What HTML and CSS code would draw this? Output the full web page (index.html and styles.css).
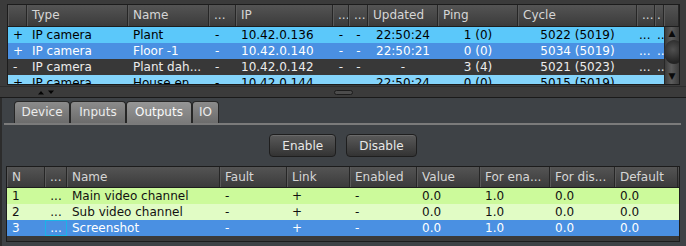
FILE: index.html
```html
<!DOCTYPE html>
<html lang="en">
<head>
  <meta charset="UTF-8" />
  <title>Devices</title>
  <link rel="stylesheet" href="styles.css">
</head>
<body>
  <!-- Device list -->
  <div class="devices">
    <div class="frame top-frame">
      <div class="dev-head">
        <div class="hcell"></div>
        <div class="hcell">Type</div>
        <div class="hcell">Name</div>
        <div class="hcell">...</div>
        <div class="hcell">IP</div>
        <div class="hcell">...</div>
        <div class="hcell">...</div>
        <div class="hcell">Updated</div>
        <div class="hcell">Ping</div>
        <div class="hcell">Cycle</div>
        <div class="hcell">...</div>
        <div class="hcell tight">.</div>
        <div class="hcell"></div>
      </div>
      <div class="dev-body">
        <div class="dev-rows">
          <div class="dev-row light">
            <div class="cell">+</div><div class="cell">IP camera</div><div class="cell">Plant</div><div class="cell dash">-</div>
            <div class="cell">10.42.0.136</div><div class="cell mid">-</div><div class="cell mid">-</div>
            <div class="cell mid">22:50:24</div><div class="cell mid">1 (0)</div><div class="cell mid">5022 (5019)</div>
            <div class="cell tight">...</div><div class="cell tight">...</div>
          </div>
          <div class="dev-row selected">
            <div class="cell">+</div><div class="cell">IP camera</div><div class="cell">Floor -1</div><div class="cell dash">-</div>
            <div class="cell">10.42.0.140</div><div class="cell mid">-</div><div class="cell mid">-</div>
            <div class="cell mid">22:50:21</div><div class="cell mid">0 (0)</div><div class="cell mid">5034 (5019)</div>
            <div class="cell tight">...</div><div class="cell tight">...</div>
          </div>
          <div class="dev-row dark">
            <div class="cell">-</div><div class="cell">IP camera</div><div class="cell">Plant dah...</div><div class="cell dash">-</div>
            <div class="cell">10.42.0.142</div><div class="cell mid">-</div><div class="cell mid">-</div>
            <div class="cell mid">-</div><div class="cell mid">3 (4)</div><div class="cell mid">5021 (5023)</div>
            <div class="cell tight">...</div><div class="cell tight">...</div>
          </div>
          <div class="dev-row pale">
            <div class="cell">+</div><div class="cell">IP camera</div><div class="cell">House en...</div><div class="cell dash">-</div>
            <div class="cell">10.42.0.144</div><div class="cell mid"></div><div class="cell mid"></div>
            <div class="cell mid">22:50:24</div><div class="cell mid">0 (0)</div><div class="cell mid">5015 (5019)</div>
            <div class="cell tight">...</div><div class="cell tight">...</div>
          </div>
        </div>
        <div class="scrollbar">
          <span class="scroll-arrow">&#9650;</span>
          <span class="scroll-thumb"></span>
          <span class="scroll-arrow">&#9660;</span>
        </div>
      </div>
    </div>
    <div class="splitter">
      <div class="split-arrows">
        <svg width="18" height="5" viewBox="0 0 18 5"><path d="M1 4.5 L4 1 L7 4.5 Z M11 0.5 L17 0.5 L14 4 Z" fill="#050505"/></svg>
      </div>
      <span class="grip"></span>
      <div></div>
    </div>
  </div>

  <!-- Detail panel -->
  <div class="panel">
    <div class="tabs">
      <div class="tab">Device</div>
      <div class="tab">Inputs</div>
      <div class="tab active">Outputs</div>
      <div class="tab">IO</div>
    </div>
    <div class="actions">
      <button class="btn">Enable</button>
      <button class="btn">Disable</button>
    </div>
    <div class="frame out-frame">
      <div class="out-head">
        <div class="hcell">N</div>
        <div class="hcell mid">...</div>
        <div class="hcell">Name</div>
        <div class="hcell">Fault</div>
        <div class="hcell">Link</div>
        <div class="hcell">Enabled</div>
        <div class="hcell">Value</div>
        <div class="hcell">For ena...</div>
        <div class="hcell">For dis...</div>
        <div class="hcell">Default</div>
      </div>
      <div class="out-row lime">
        <div class="cell">1</div><div class="cell mid">...</div><div class="cell">Main video channel</div><div class="cell">-</div><div class="cell">+</div>
        <div class="cell">-</div><div class="cell">0.0</div><div class="cell">1.0</div><div class="cell">0.0</div><div class="cell">0.0</div>
      </div>
      <div class="out-row mint">
        <div class="cell">2</div><div class="cell mid">...</div><div class="cell">Sub video channel</div><div class="cell">-</div><div class="cell">+</div>
        <div class="cell">-</div><div class="cell">0.0</div><div class="cell">1.0</div><div class="cell">0.0</div><div class="cell">0.0</div>
      </div>
      <div class="out-row selected">
        <div class="cell">3</div><div class="cell mid focus">...</div><div class="cell">Screenshot</div><div class="cell">-</div><div class="cell">+</div>
        <div class="cell">-</div><div class="cell">0.0</div><div class="cell">1.0</div><div class="cell">0.0</div><div class="cell">0.0</div>
      </div>
    </div>
  </div>
</body>
</html>
```

FILE: styles.css
```css
body {
  margin: 0;
  width: 686px;
  height: 246px;
  overflow: hidden;
  font-family: 'DejaVu Sans', sans-serif;
  font-size: 12px;
  background: #3b3b3b;
  color: #e6e6e6;
}

/* Shared grid frame */
.frame {
  border: 1px solid #1c1c1c;
  background: #3a3a3a;
  overflow: hidden;
}

.hcell {
  padding: 0 5px;
  white-space: nowrap;
  overflow: hidden;
  color: #d6d6d6;
  border-right: 1px solid #262626;
  box-shadow: inset 1px 0 #5a5a5a;
}

.cell {
  padding: 0 5px;
  white-space: nowrap;
  overflow: hidden;
}

.mid { text-align: center; }
.tight { padding: 0 2px; }
.dash { padding-left: 6px; }

/* Device list */
.top-frame {
  margin: 4px 6px 0 7px;
  height: 79px;
  display: flex;
  flex-direction: column;
}

.dev-head {
  display: grid;
  grid-template-columns: 19px 101px 81px 27px 97px 16px 19px 70px 80px 119px 18px 9px 15px;
  height: 21px;
  line-height: 21px;
  border-bottom: 1px solid #1e1e1e;
  background: linear-gradient(to bottom, #545454, #3b3b3b);
}

.dev-body {
  display: flex;
  flex: 1;
  overflow: hidden;
}

.dev-rows {
  flex: 1;
}

.dev-row {
  display: grid;
  grid-template-columns: 19px 101px 81px 27px 97px 16px 19px 70px 80px 119px 18px 9px;
  height: 16px;
  line-height: 16px;
}

.dev-row.light { background: #5bc8fa; color: #000; }
.dev-row.selected { background: #4a90e2; color: #fff; }
.dev-row.dark { background: #383838; color: #ececec; }
.dev-row.pale { background: #84d4fb; color: #000; }

.scrollbar {
  width: 15px;
  display: flex;
  flex-direction: column;
  align-items: center;
  background: linear-gradient(to right, #3c3c3c, #5c5c5c 45%, #3c3c3c);
  border-left: 1px solid #262626;
  box-sizing: border-box;
}

.scroll-arrow {
  font-size: 9px;
  line-height: 12px;
  color: #0a0a0a;
}

.scroll-thumb {
  width: 20px;
  height: 24px;
  margin: 1px 0 6px 4px;
  border-radius: 50%;
  background: radial-gradient(circle at 45% 40%, #505050, #242424 70%);
}

/* Splitter */
.splitter {
  display: grid;
  grid-template-columns: 1fr auto 1fr;
  align-items: center;
  height: 10px;
  margin-top: 1px;
  border-top: 1px solid #2d2d2d;
  border-bottom: 1px solid #1a1a1a;
}

.split-arrows {
  padding-left: 37px;
  line-height: 0;
}

.grip {
  width: 17px;
  height: 3px;
  border: 1px solid #1c1c1c;
  border-radius: 3px;
  background: #4c4c4c;
}

/* Detail panel */
.panel {
  height: 149px;
  background: #3e4246;
  box-shadow: inset 2px 0 #2c2c2c;
  overflow: hidden;
}

.tabs {
  display: flex;
  margin: 0 5px 0 4px;
  padding: 3px 0 0 10px;
  border-bottom: 2px solid #7b7b7b;
}

.tab {
  box-sizing: border-box;
  min-width: 56px;
  height: 22px;
  line-height: 21px;
  padding: 0 6px;
  text-align: center;
  border: 1px solid #262626;
  border-bottom: none;
  border-radius: 4px 4px 0 0;
  background: linear-gradient(to bottom, #8b8b8b, #6c6c6c);
  color: #ececec;
}

.tab:last-child { min-width: 0; }

.tab.active {
  padding: 0 8px;
  background: linear-gradient(to bottom, #969696, #7a7a7a);
  color: #fafafa;
}

.actions {
  display: flex;
  justify-content: center;
  gap: 10px;
  margin-top: 9px;
}

.btn {
  height: 23px;
  padding: 0 12px;
  font-family: 'DejaVu Sans', sans-serif;
  font-size: 12px;
  color: #e8e8e8;
  border: 1px solid #1e1e1e;
  border-radius: 4px;
  background: linear-gradient(to bottom, #5a5a5a, #333333);
  box-shadow: inset 0 1px #6a6a6a;
}

/* Outputs table */
.out-frame {
  margin: 9px 6px 0 6px;
  height: 74px;
}

.out-head {
  display: grid;
  grid-template-columns: 38px 22px 153px 67px 63px 67px 63px 70px 65px 63px;
  height: 20px;
  line-height: 20px;
  border-bottom: 1px solid #1e1e1e;
  background: linear-gradient(to bottom, #545454, #3b3b3b);
}

.out-row {
  display: grid;
  grid-template-columns: 38px 22px 153px 67px 63px 67px 63px 70px 65px 63px;
  height: 16px;
  line-height: 16px;
  color: #111;
}

.out-row.lime { background: #ccfa9b; }
.out-row.mint { background: #e1fcc5; }
.out-row.selected { background: #4a90e2; color: #fff; }

.cell.focus {
  border: 1px solid #19b4e8;
  line-height: 14px;
  padding: 0 4px;
}
```
